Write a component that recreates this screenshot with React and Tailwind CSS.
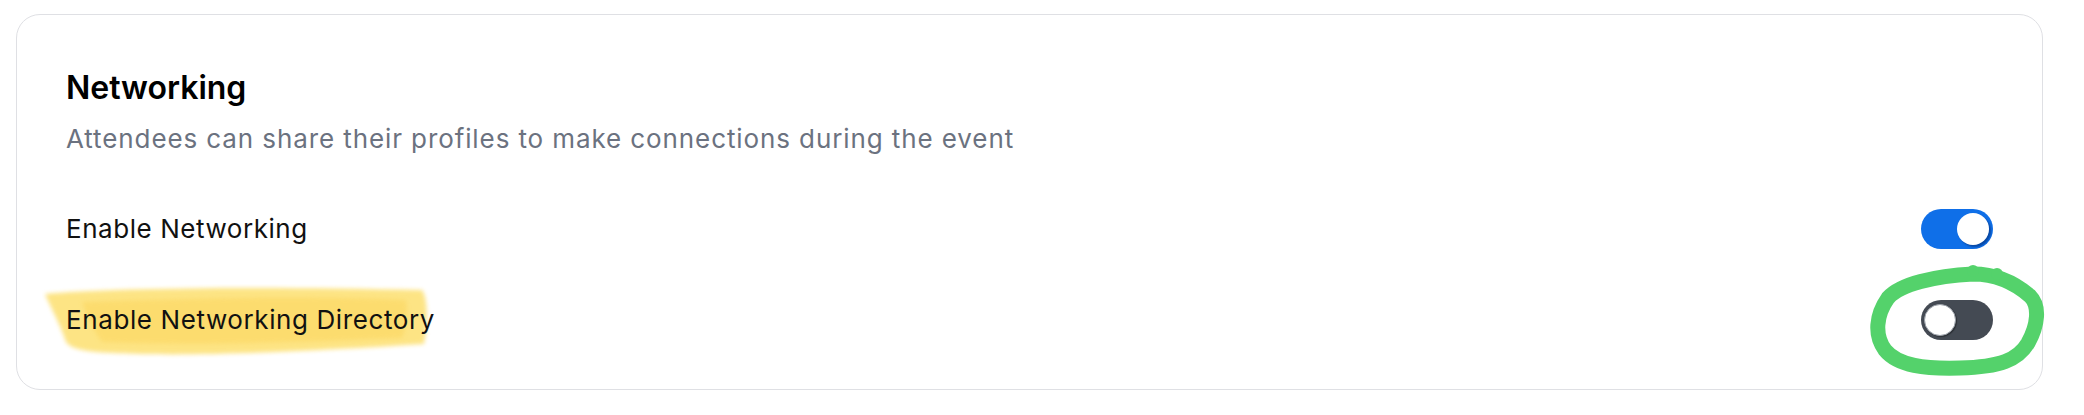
import React from "react";

function Toggle({ on }) {
  return (
    <div
      className={
        "relative w-[72px] h-[40px] rounded-full shrink-0 " +
        (on ? "bg-[#0f6fe8]" : "bg-[#444a53]")
      }
    >
      <div
        className={
          "absolute top-[4px] w-[32px] h-[32px] rounded-full bg-white " +
          (on
            ? "right-[4px] shadow-[2px_2px_2px_rgba(0,40,110,0.55)]"
            : "left-[3px] border border-[#9aa0a8] shadow-[1px_1px_1px_rgba(0,0,0,0.35)]")
        }
      />
    </div>
  );
}

export default function App() {
  return (
    <div className="w-[2084px] h-[415px] bg-white relative overflow-hidden" style={{ fontFamily: "Inter, 'Noto Sans', sans-serif" }}>
      <div className="ml-[16px] mt-[14px] w-[2027px] h-[376px] border border-[#dfe0e4] rounded-[24px] pt-[53px] pl-[49px] pr-[49px]">
        <h2 className="text-[32px] leading-[40px] font-semibold text-black tracking-[0px]">Networking</h2>
        <p className="mt-[13px] text-[26px] leading-[36px] text-[#6b7280] tracking-[0.9px]">
          Attendees can share their profiles to make connections during the event
        </p>
        <div className="mt-[52px] flex flex-col gap-[51px]">
          <div className="flex items-center justify-between h-[40px]">
            <span className="text-[26px] leading-[40px] text-[#111] tracking-[0.55px]">Enable Networking</span>
            <Toggle on />
          </div>
          <div className="flex items-center justify-between h-[40px]">
            <span className="relative text-[26px] leading-[40px] text-[#111] tracking-[0.6px]">
              <svg className="absolute left-[-24px] top-[-16px] w-[400px] h-[80px] pointer-events-none" viewBox="0 0 400 80">
                <defs>
                  <filter id="soft" x="-10%" y="-30%" width="120%" height="160%">
                    <feGaussianBlur stdDeviation="2" />
                  </filter>
                </defs>
                <path
                  d="M3 10 C 60 4, 220 2, 380 6 C 386 14, 386 40, 382 60 C 290 66, 170 72, 100 70 C 60 69, 30 68, 24 58 C 18 40, 8 22, 3 10 Z"
                  fill="#fde27a"
                  opacity="0.92"
                  filter="url(#soft)"
                />
                <path
                  d="M40 18 C 150 14, 270 12, 364 16 C 366 30, 364 44, 360 54 C 260 58, 150 62, 60 58 C 50 44, 44 30, 40 18 Z"
                  fill="#fcd760"
                  opacity="0.6"
                  filter="url(#soft)"
                />
              </svg>
              <span className="relative">Enable Networking Directory</span>
            </span>
            <Toggle on={false} />
          </div>
        </div>
      </div>
      <svg className="absolute left-0 top-0 w-[2084px] h-[415px] pointer-events-none" viewBox="0 0 2084 415">
        <path
          d="M1973 274 C 1995 274, 2015 283, 2030 296 C 2040 306, 2038 325, 2028 343 C 2018 360, 2000 367, 1960 368 C 1925 369, 1898 366, 1885 350 C 1874 335, 1876 315, 1888 298 C 1900 284, 1935 276, 1973 274 Z"
          fill="none"
          stroke="#54d26b"
          strokeWidth="15"
          strokeLinejoin="round"
        />
        <circle cx="1973" cy="271" r="6" fill="#54d26b" />
        <circle cx="1997" cy="274" r="6" fill="#54d26b" />
      </svg>
    </div>
  );
}
